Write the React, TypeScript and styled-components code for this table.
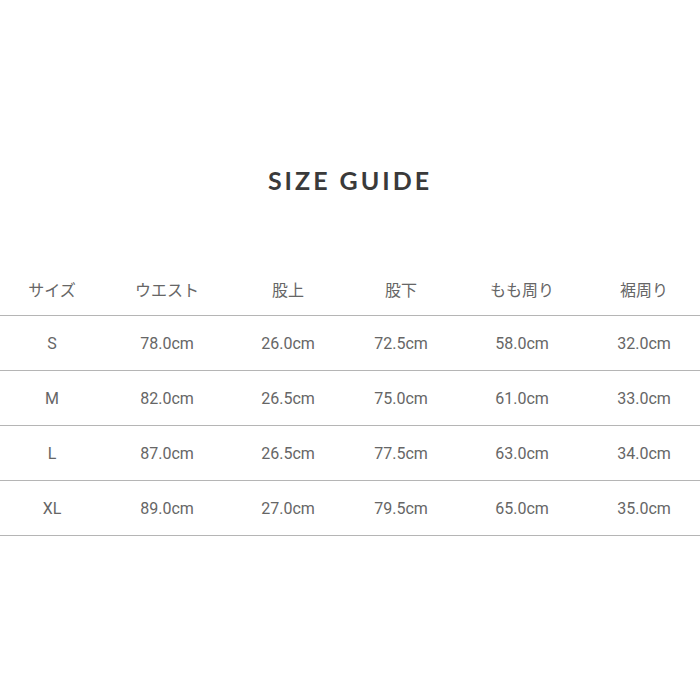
import styled, { createGlobalStyle } from "styled-components";

const GlobalStyle = createGlobalStyle`
  html, body {
    margin: 0;
    padding: 0;
    background: #ffffff;
  }
`;

const HEADERS = ["サイズ", "ウエスト", "股上", "股下", "もも周り", "裾周り"];

const ROWS: string[][] = [
  ["S", "78.0cm", "26.0cm", "72.5cm", "58.0cm", "32.0cm"],
  ["M", "82.0cm", "26.5cm", "75.0cm", "61.0cm", "33.0cm"],
  ["L", "87.0cm", "26.5cm", "77.5cm", "63.0cm", "34.0cm"],
  ["XL", "89.0cm", "27.0cm", "79.5cm", "65.0cm", "35.0cm"],
];

export default function App(): JSX.Element {
  return (
    <Page>
      <GlobalStyle />
      <Title>SIZE GUIDE</Title>
      <Table>
        <HeaderRow>
          {HEADERS.map((h) => (
            <Cell key={h}>{h}</Cell>
          ))}
        </HeaderRow>
        {ROWS.map((row) => (
          <Row key={row[0]}>
            {row.map((value, i) => (
              <Cell key={i}>{value}</Cell>
            ))}
          </Row>
        ))}
      </Table>
    </Page>
  );
}

const Page = styled.div`
  width: 700px;
  height: 700px;
  padding-top: 163px;
  box-sizing: border-box;
  background: #ffffff;
`;

const Title = styled.h1`
  margin: 0;
  text-align: center;
  font-family: Lato, "Liberation Sans", sans-serif;
  font-weight: 700;
  font-size: 25px;
  line-height: 34px;
  letter-spacing: 3px;
  color: #3a3a3a;
`;

const Table = styled.div`
  margin-top: 65px;
  display: flex;
  flex-direction: column;
`;

const Row = styled.div`
  display: grid;
  grid-template-columns: 104px 126px 116px 110px 132px 112px;
  height: 54px;
  align-items: center;
  border-bottom: 1px solid #b5b5b5;
`;

const HeaderRow = styled(Row)`
  height: 53px;
`;

const Cell = styled.div`
  text-align: center;
  font-family: Roboto, "Noto Sans CJK JP", sans-serif;
  font-size: 16px;
  color: #666666;
`;
